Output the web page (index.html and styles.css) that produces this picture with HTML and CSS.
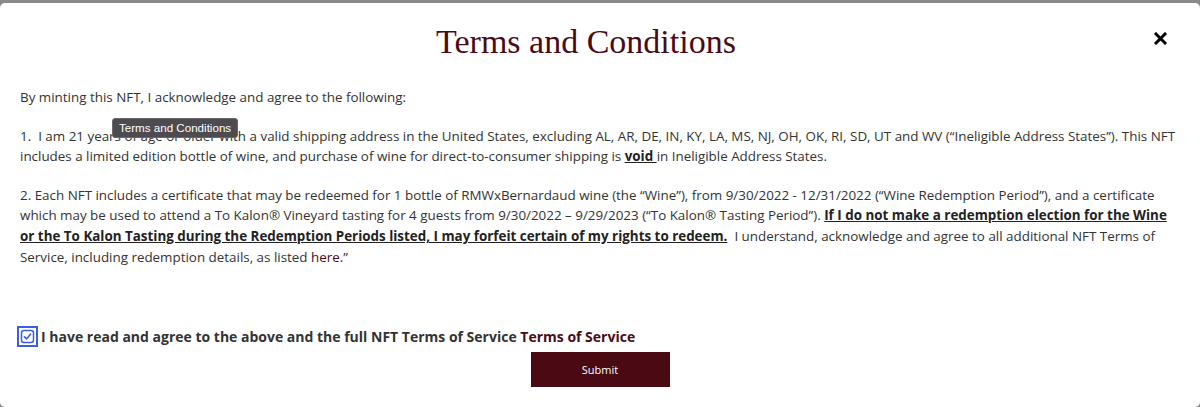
FILE: index.html
```html
<!DOCTYPE html>
<html lang="en">
<head>
<meta charset="utf-8">
<title>Terms and Conditions</title>
<link rel="stylesheet" href="styles.css">
</head>
<body>
<div class="modal">
  <div class="header">
    <h1 class="title">Terms and Conditions</h1>
    <button class="close" aria-label="Close">
      <svg width="13" height="13" viewBox="0 0 13 13"><path d="M2 2 L11 11 M11 2 L2 11" stroke="#000" stroke-width="3" stroke-linecap="square"/></svg>
    </button>
  </div>
  <div class="body">
    <p>By minting this NFT, I acknowledge and agree to the following:</p>
    <p>1.&nbsp; I am 21 years of age or older with a valid shipping address in the United States, excluding AL, AR, DE, IN, KY, LA, MS, NJ, OH, OK, RI, SD, UT and WV (“Ineligible Address States”). This NFT includes a limited edition bottle of wine, and purchase of wine for direct-to-consumer shipping is <u class="strong">void </u>in Ineligible Address States.</p>
    <p>2. Each NFT includes a certificate that may be redeemed for 1 bottle of RMWxBernardaud wine (the “Wine”), from 9/30/2022 - 12/31/2022 (“Wine Redemption Period”), and a certificate which may be used to attend a To Kalon® Vineyard tasting for 4 guests from 9/30/2022 – 9/29/2023 (“To Kalon® Tasting Period”). <u class="strong">If I do not make a redemption election for the Wine or the To Kalon Tasting during the Redemption Periods listed, I may forfeit certain of my rights to redeem.</u>&nbsp; I understand, acknowledge and agree to all additional NFT Terms of Service, including redemption details, as listed <a class="link" href="#">here</a>.”</p>
  </div>
  <div class="agree">
    <span class="check">
      <svg width="21" height="21" viewBox="0 0 21 21">
        <rect x="1" y="1" width="19" height="19" fill="none" stroke="#3c5fe0" stroke-width="2"/>
        <rect x="4.5" y="4.5" width="12" height="12" rx="2.5" fill="#fff" stroke="#3c5fe0" stroke-width="1.5"/>
        <path d="M7.5 10.8 L9.6 12.8 L13.5 8.2" fill="none" stroke="#3c5fe0" stroke-width="1.6" stroke-linecap="round" stroke-linejoin="round"/>
      </svg>
    </span>
    <span class="agree-text">I have read and agree to the above and the full NFT Terms of Service <a class="link" href="#">Terms of Service</a></span>
  </div>
  <div class="actions">
    <button class="submit">Submit</button>
  </div>
  <div class="tooltip">Terms and Conditions</div>
</div>
</body>
</html>
```

FILE: styles.css
```css
html, body {
  margin: 0;
  padding: 0;
}
body {
  background: #8a8a8a;
  height: 407px;
  overflow: hidden;
}
.modal {
  position: relative;
  margin-top: 3px;
  height: 404px;
  background: #fff;
  border-radius: 5px;
  padding: 0 20px;
  box-sizing: border-box;
  font-family: "Open Sans", sans-serif;
  color: #333;
}
.header {
  position: relative;
  display: flex;
  justify-content: center;
  align-items: center;
  padding-top: 19px;
  padding-right: 28px;
}
.title {
  margin: 0;
  font-family: "Liberation Serif", serif;
  font-weight: normal;
  font-size: 34px;
  line-height: 40px;
  color: #4a0a17;
}
.close {
  position: absolute;
  right: 13px;
  top: 29px;
  border: 0;
  background: none;
  padding: 0;
  width: 13px;
  height: 13px;
  display: flex;
}
.body {
  padding-top: 25px;
  font-size: 13.4px;
  line-height: 20.6px;
}
.body p {
  margin: 0 0 18px;
}
.strong {
  font-weight: 700;
  color: #222;
}
.link {
  color: #4a0a17;
  text-decoration: none;
}
.agree {
  display: flex;
  align-items: center;
  gap: 3px;
  margin-top: 59px;
  margin-left: -3px;
  font-size: 14px;
  font-weight: 700;
  line-height: 20px;
}
.check {
  display: flex;
}
.agree-text .link {
  font-weight: 700;
}
.actions {
  display: flex;
  justify-content: center;
  margin-top: 5px;
}
.submit {
  width: 139px;
  height: 35px;
  border: 0;
  background: #4a0a14;
  color: #fff;
  font-family: "Open Sans", sans-serif;
  font-size: 11px;
}
.tooltip {
  position: absolute;
  left: 112px;
  top: 115px;
  height: 18px;
  padding: 0 6px;
  background: #4d4b50;
  color: #fff;
  border: 1px solid #6a686c;
  border-radius: 3px;
  font-family: "Liberation Sans", sans-serif;
  font-size: 11.6px;
  line-height: 18px;
}
```
